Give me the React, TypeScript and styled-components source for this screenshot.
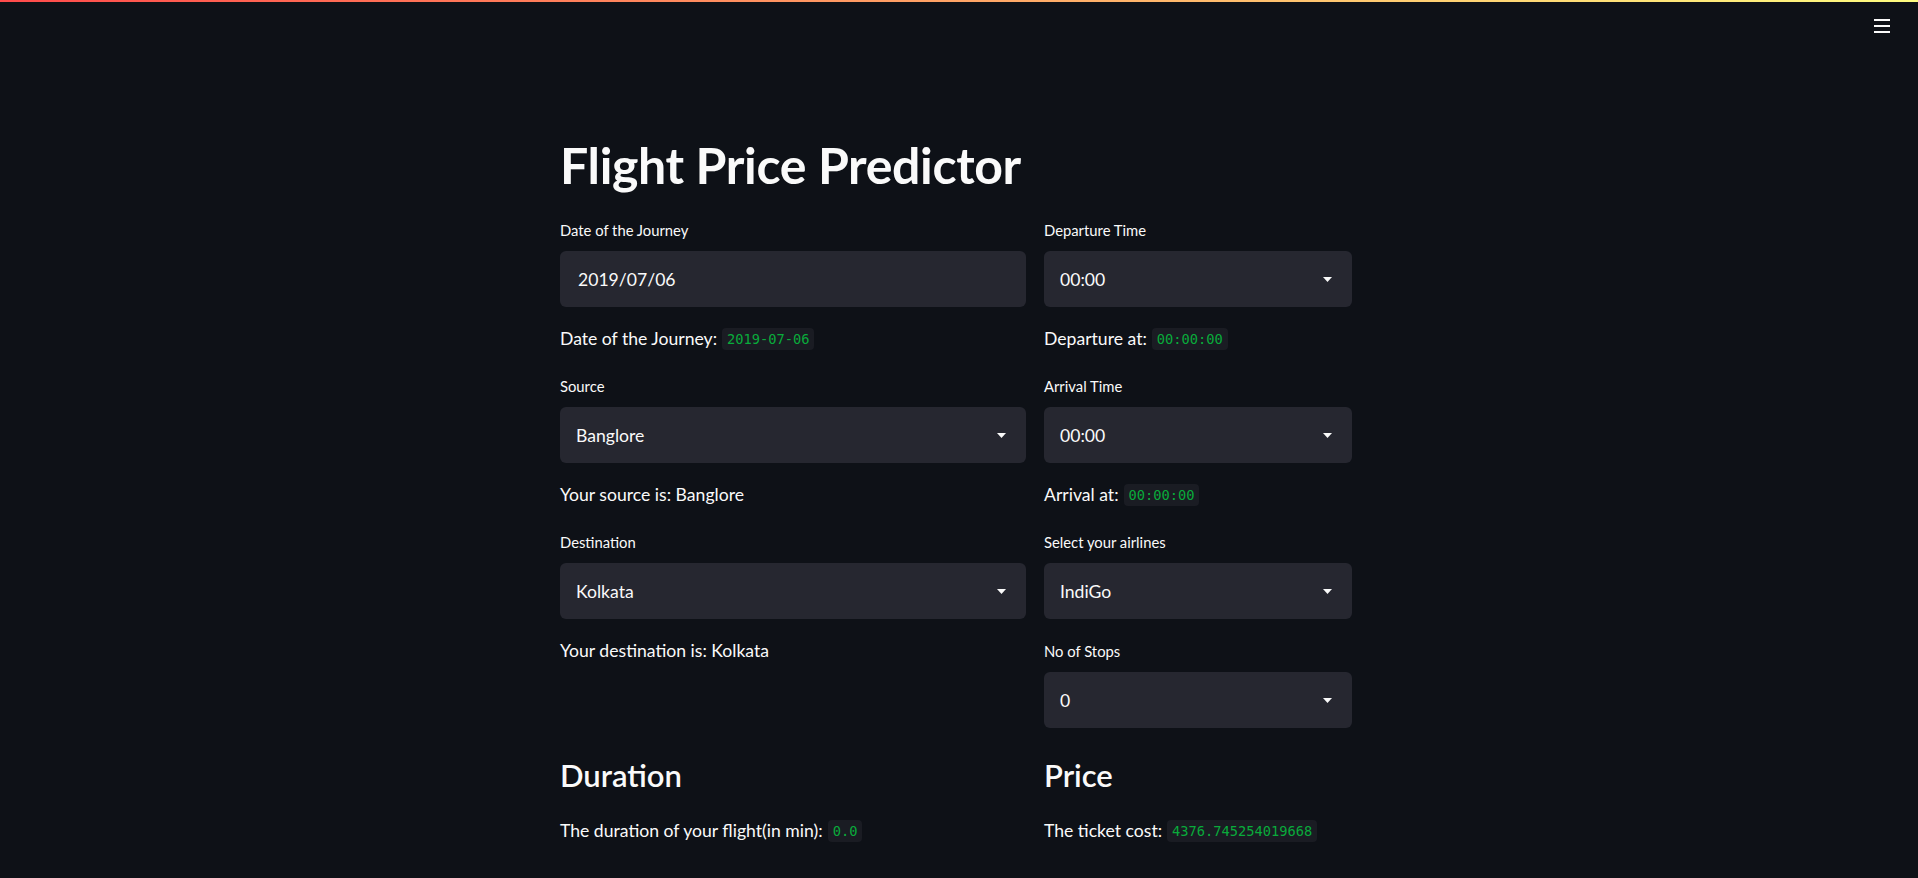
import React from "react";
import styled, { createGlobalStyle } from "styled-components";

const GlobalStyle = createGlobalStyle`
  html, body { margin: 0; padding: 0; background: #0e1117; }
  body { font-family: Lato, "Noto Sans", sans-serif; color: #fafafa; }
  * { box-sizing: border-box; }
`;

const Page = styled.div`
  min-height: 878px;
  background: #0e1117;
  overflow: hidden;
`;

const Decoration = styled.div`
  height: 2px;
  background: linear-gradient(90deg, #ff4b4b, #fffd80);
`;

const Header = styled.header`
  height: 48px;
  display: flex;
  align-items: center;
  justify-content: flex-end;
  padding-right: 28px;
`;

const MenuButton = styled.button`
  background: none;
  border: none;
  padding: 0;
  width: 16px;
  height: 14px;
  display: flex;
  color: #fafafa;
  cursor: pointer;
`;

const Wrapper = styled.div`
  display: flex;
  justify-content: center;
  padding-right: 6px;
`;

const Main = styled.main`
  width: 792px;
  padding-top: 82px;
  display: flex;
  flex-direction: column;
  gap: 17px;
`;

const Title = styled.h1`
  margin: 0;
  font-size: 50px;
  font-weight: 700;
  line-height: 66px;
  letter-spacing: -0.35px;
  color: #fafafa;
`;

const Columns = styled.div`
  display: grid;
  grid-template-columns: 466px 308px;
  column-gap: 18px;
`;

const Column = styled.div`
  display: flex;
  flex-direction: column;
  gap: 17px;
`;

const Widget = styled.div`
  display: flex;
  flex-direction: column;
  gap: 6px;
`;

const Label = styled.label`
  font-size: 14.8px;
  line-height: 30px;
  height: 30px;
  color: #fafafa;
`;

const FieldBox = styled.div<{ $pad?: number }>`
  height: 56px;
  border-radius: 6px;
  background: #262730;
  display: flex;
  align-items: center;
  padding: 0 20px 0 ${(p) => p.$pad ?? 16}px;
  font-size: 17.6px;
  color: #fafafa;
`;

const Value = styled.span`
  flex: 1;
`;

const Caret = styled.svg`
  width: 9px;
  height: 5px;
`;

const Text = styled.p`
  margin: 0;
  font-size: 17.6px;
  line-height: 30px;
  height: 30px;
  display: flex;
  align-items: center;
  gap: 5px;
  color: #fafafa;
`;

const Code = styled.code`
  font-family: "DejaVu Sans Mono", "Liberation Mono", monospace;
  font-size: 13.7px;
  color: #09ab3b;
  background: #1a1c23;
  border-radius: 4px;
  padding: 0 5px;
  height: 22px;
  line-height: 22px;
  display: inline-block;
`;

const Heading = styled.h2`
  margin: 0;
  font-size: 31px;
  font-weight: 600;
  line-height: 41px;
  padding: 10px 0 3px;
  color: #fafafa;
`;

const MenuIcon = () => (
  <svg width="16" height="14" viewBox="0 0 16 14">
    <rect x="0" y="0" width="16" height="2" fill="currentColor" />
    <rect x="0" y="6" width="16" height="2" fill="currentColor" />
    <rect x="0" y="12" width="16" height="2" fill="currentColor" />
  </svg>
);

const Select = ({ value }: { value: string }) => (
  <FieldBox>
    <Value>{value}</Value>
    <Caret viewBox="0 0 9 5">
      <path d="M0 0 L9 0 L4.5 5 Z" fill="#fafafa" />
    </Caret>
  </FieldBox>
);

const Field = ({ label, children }: { label: string; children: React.ReactNode }) => (
  <Widget>
    <Label>{label}</Label>
    {children}
  </Widget>
);

export default function App() {
  return (
    <Page>
      <GlobalStyle />
      <Decoration />
      <Header>
        <MenuButton aria-label="menu">
          <MenuIcon />
        </MenuButton>
      </Header>
      <Wrapper>
        <Main>
          <Title>Flight Price Predictor</Title>
          <Columns>
            <Column>
              <Field label="Date of the Journey">
                <FieldBox $pad={18}>
                  <Value>2019/07/06</Value>
                </FieldBox>
              </Field>
              <Text>
                Date of the Journey: <Code>2019-07-06</Code>
              </Text>
              <Field label="Source">
                <Select value="Banglore" />
              </Field>
              <Text>Your source is: Banglore</Text>
              <Field label="Destination">
                <Select value="Kolkata" />
              </Field>
              <Text>Your destination is: Kolkata</Text>
            </Column>
            <Column>
              <Field label="Departure Time">
                <Select value="00:00" />
              </Field>
              <Text>
                Departure at: <Code>00:00:00</Code>
              </Text>
              <Field label="Arrival Time">
                <Select value="00:00" />
              </Field>
              <Text>
                Arrival at: <Code>00:00:00</Code>
              </Text>
              <Field label="Select your airlines">
                <Select value="IndiGo" />
              </Field>
              <Field label="No of Stops">
                <Select value="0" />
              </Field>
            </Column>
          </Columns>
          <Columns>
            <Column>
              <Heading>Duration</Heading>
              <Text>
                The duration of your flight(in min): <Code>0.0</Code>
              </Text>
            </Column>
            <Column>
              <Heading>Price</Heading>
              <Text>
                The ticket cost: <Code>4376.745254019668</Code>
              </Text>
            </Column>
          </Columns>
        </Main>
      </Wrapper>
    </Page>
  );
}
